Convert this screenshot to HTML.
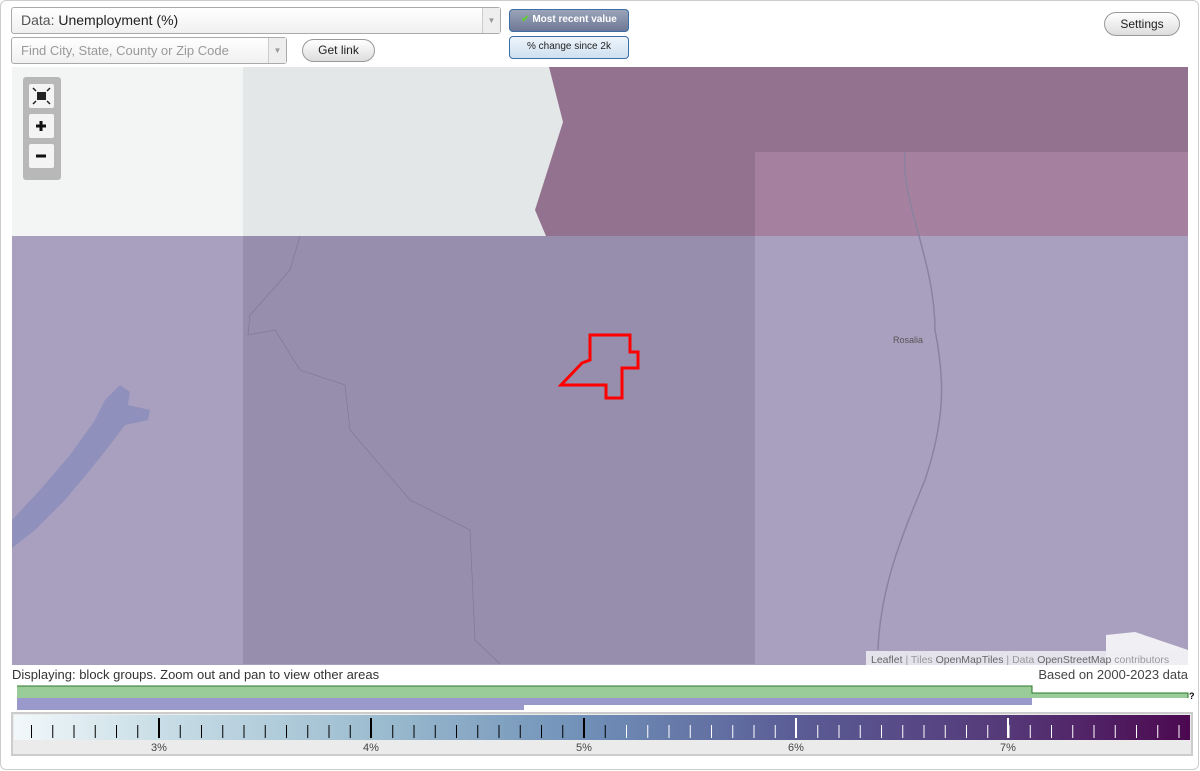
<!DOCTYPE html>
<html><head><meta charset="utf-8"><style>
*{margin:0;padding:0;box-sizing:border-box}
body{width:1200px;height:771px;background:#fff;font-family:"Liberation Sans",sans-serif;position:relative;overflow:hidden}
.frame{position:absolute;left:0;top:0;width:1199px;height:770px;border:1px solid #ccc;border-radius:6px}
.sel{position:absolute;border:1px solid #aaa;border-radius:3px;background:linear-gradient(#fff,#f0f0f0);font-size:14px;color:#555}
.arr{position:absolute;right:0;top:0;bottom:0;width:18px;border-left:1px solid #ccc;background:#eee;color:#999;font-size:8px;text-align:center}
.btn{position:absolute;border:1px solid #999;border-radius:12px;background:linear-gradient(#fff,#ddd);font-size:12px;color:#222;text-align:center}
.tg{position:absolute;left:509px;width:120px;height:23px;border:1px solid #3a6ea5;border-radius:4px;font-size:10px;text-align:center;line-height:20px}
</style></head><body>
<div class="frame"></div>
<div class="sel" style="left:11px;top:7px;width:490px;height:27px;line-height:25px;padding-left:9px">Data: <span style="color:#222">Unemployment (%)</span><div class="arr" style="line-height:25px">▼</div></div>
<div class="sel" style="left:11px;top:37px;width:276px;height:27px;line-height:25px;padding-left:9px;font-size:13px;color:#999">Find City, State, County or Zip Code<div class="arr" style="line-height:25px">▼</div></div>
<div class="btn" style="left:302px;top:39px;width:73px;height:23px;line-height:21px">Get link</div>
<div class="tg" style="top:9px;background:linear-gradient(#9aa3b8,#6e7896);color:#fff;font-weight:bold"><span style="color:#6c3">✔</span> Most recent value</div>
<div class="tg" style="top:36px;background:linear-gradient(#eef5fb,#cfe0f0);color:#222">% change since 2k</div>
<div class="btn" style="left:1104px;top:12px;width:76px;height:24px;line-height:22px">Settings</div>

<svg style="position:absolute;left:0;top:0" width="1200" height="771">
<g>
<rect x="12" y="67" width="1176" height="598" fill="#a9a0bf"/>
<rect x="12" y="67" width="231" height="169" fill="#f3f5f5"/>
<rect x="243" y="67" width="320" height="169" fill="#e4e7e7"/>
<polygon points="549,67 1188,67 1188,236 546,236 535,210 563,122" fill="#93728f"/>
<rect x="755" y="152" width="433" height="84" fill="#a5819f"/>
<rect x="243" y="236" width="512" height="428" fill="#978ead"/>
<path d="M12,520 L40,490 L70,455 L95,420 L105,400 L120,385 L130,392 L128,405 L150,410 L148,420 L125,425 L110,445 L90,470 L65,500 L35,530 L12,548Z" fill="#8b8dbb" opacity="0.85"/>
<path d="M1106,665 L1106,635 L1135,632 L1188,650 L1188,665Z" fill="#f0eff4"/>
<path d="M905,152 C900,200 935,260 935,330 C945,380 945,420 925,480 C900,540 880,590 878,650" fill="none" stroke="#8a82a0" stroke-width="1.5"/>
<path d="M300,236 L290,270 L250,315 L248,335 L275,330 L300,370 L345,385 L350,430 L410,500 L470,530 L475,640 L500,664" fill="none" stroke="#7d7595" stroke-width="0.6"/>
<polygon points="590,335 630,335 630,352 638,352 638,368 622,368 622,398 606,398 606,385 561,385 582,363 590,360" fill="none" stroke="#f00" stroke-width="3"/>
<text x="893" y="343" font-size="9" fill="#555" font-family="Liberation Sans">Rosalia</text>
<rect x="23" y="77" width="38" height="103" rx="3" fill="#b8b8b8"/>
<rect x="29" y="84" width="25" height="24" rx="2" fill="#f4f4f4"/>
<rect x="29" y="114" width="25" height="24" rx="2" fill="#f4f4f4"/>
<rect x="29" y="144" width="25" height="24" rx="2" fill="#f4f4f4"/>
<rect x="37" y="92" width="9" height="8" fill="#222"/>
<path d="M33,88l3,3M50,88l-3,3M33,104l3,-3M50,104l-3,-3" stroke="#222" stroke-width="1.5"/>
<path d="M41,121v10M36,126h10" stroke="#111" stroke-width="3"/>
<path d="M36,156h10" stroke="#111" stroke-width="3"/>
<rect x="866" y="651" width="322" height="14" fill="#eeedf2" opacity="0.85"/>
<text x="871" y="663" font-size="10.5" fill="#999" font-family="Liberation Sans"><tspan fill="#666">Leaflet</tspan> | Tiles <tspan fill="#666">OpenMapTiles</tspan> | Data <tspan fill="#666">OpenStreetMap</tspan> contributors</text>
</g>
<text x="12" y="679" font-size="13" fill="#333" font-family="Liberation Sans">Displaying: block groups. Zoom out and pan to view other areas</text>
<text x="1188" y="679" font-size="13" fill="#444" text-anchor="end" font-family="Liberation Sans">Based on 2000-2023 data</text>
<rect x="17" y="686" width="1015" height="12" fill="#99cc99"/>
<rect x="1032" y="693" width="156" height="5" fill="#99cc99"/>
<path d="M17,686H1032V693H1188V698" fill="none" stroke="#2a7a2a" stroke-width="1"/>
<text x="1189" y="699" font-size="9" font-weight="bold" fill="#000" font-family="Liberation Sans">?</text>
<rect x="17" y="698" width="507" height="12" fill="#9999cc"/>
<rect x="524" y="698" width="508" height="7" fill="#9999cc"/>
<defs>
<linearGradient id="g" x1="0" x2="1">
<stop offset="0" stop-color="#f2f8fa"/><stop offset="0.125" stop-color="#c8dde6"/><stop offset="0.305" stop-color="#9dbdd0"/><stop offset="0.485" stop-color="#7090b8"/><stop offset="0.667" stop-color="#5a5c95"/><stop offset="0.847" stop-color="#553878"/><stop offset="1" stop-color="#4c0850"/>
</linearGradient>
<pattern id="pb" x="31" y="0" width="21.25" height="771" patternUnits="userSpaceOnUse"><rect x="0" y="725" width="1" height="13" fill="#000"/></pattern>
<pattern id="pw" x="31" y="0" width="21.25" height="771" patternUnits="userSpaceOnUse"><rect x="0" y="725" width="1" height="13" fill="#fff"/></pattern>
</defs>
<rect x="11" y="712" width="1182" height="44" fill="#ccc"/>
<rect x="13" y="714" width="1178" height="40" fill="#ebebeb"/>
<rect x="14" y="715" width="1176" height="25" fill="url(#g)"/>
<rect x="20" y="715" width="600" height="25" fill="url(#pb)"/>
<rect x="620" y="715" width="560" height="25" fill="url(#pw)"/>
<rect x="158" y="718" width="2" height="20" fill="#000"/>
<rect x="370" y="718" width="2" height="20" fill="#000"/>
<rect x="583" y="718" width="2" height="20" fill="#000"/>
<rect x="795" y="718" width="2" height="20" fill="#fff"/>
<rect x="1007" y="718" width="2" height="20" fill="#fff"/>
<g font-size="11" fill="#444" text-anchor="middle" font-family="Liberation Sans">
<text x="159" y="751">3%</text><text x="371" y="751">4%</text><text x="584" y="751">5%</text><text x="796" y="751">6%</text><text x="1008" y="751">7%</text>
</g>
</svg>
</body></html>
